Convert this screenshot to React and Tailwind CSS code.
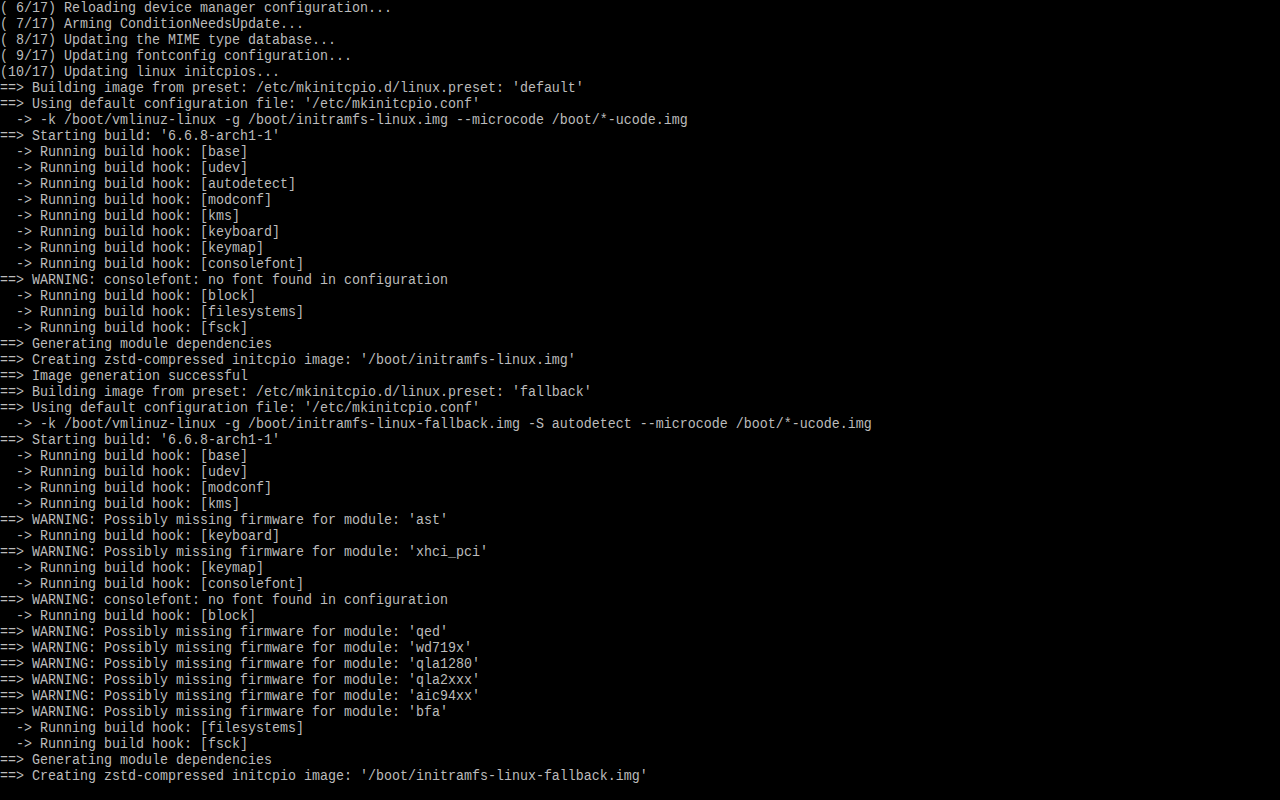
import React from 'react';

const lines = [
    '( 6/17) Reloading device manager configuration...',
    '( 7/17) Arming ConditionNeedsUpdate...',
    '( 8/17) Updating the MIME type database...',
    '( 9/17) Updating fontconfig configuration...',
    '(10/17) Updating linux initcpios...',
    "==> Building image from preset: /etc/mkinitcpio.d/linux.preset: 'default'",
    "==> Using default configuration file: '/etc/mkinitcpio.conf'",
    '  -> -k /boot/vmlinuz-linux -g /boot/initramfs-linux.img --microcode /boot/*-ucode.img',
    "==> Starting build: '6.6.8-arch1-1'",
    '  -> Running build hook: [base]',
    '  -> Running build hook: [udev]',
    '  -> Running build hook: [autodetect]',
    '  -> Running build hook: [modconf]',
    '  -> Running build hook: [kms]',
    '  -> Running build hook: [keyboard]',
    '  -> Running build hook: [keymap]',
    '  -> Running build hook: [consolefont]',
    '==> WARNING: consolefont: no font found in configuration',
    '  -> Running build hook: [block]',
    '  -> Running build hook: [filesystems]',
    '  -> Running build hook: [fsck]',
    '==> Generating module dependencies',
    "==> Creating zstd-compressed initcpio image: '/boot/initramfs-linux.img'",
    '==> Image generation successful',
    "==> Building image from preset: /etc/mkinitcpio.d/linux.preset: 'fallback'",
    "==> Using default configuration file: '/etc/mkinitcpio.conf'",
    '  -> -k /boot/vmlinuz-linux -g /boot/initramfs-linux-fallback.img -S autodetect --microcode /boot/*-ucode.img',
    "==> Starting build: '6.6.8-arch1-1'",
    '  -> Running build hook: [base]',
    '  -> Running build hook: [udev]',
    '  -> Running build hook: [modconf]',
    '  -> Running build hook: [kms]',
    "==> WARNING: Possibly missing firmware for module: 'ast'",
    '  -> Running build hook: [keyboard]',
    "==> WARNING: Possibly missing firmware for module: 'xhci_pci'",
    '  -> Running build hook: [keymap]',
    '  -> Running build hook: [consolefont]',
    '==> WARNING: consolefont: no font found in configuration',
    '  -> Running build hook: [block]',
    "==> WARNING: Possibly missing firmware for module: 'qed'",
    "==> WARNING: Possibly missing firmware for module: 'wd719x'",
    "==> WARNING: Possibly missing firmware for module: 'qla1280'",
    "==> WARNING: Possibly missing firmware for module: 'qla2xxx'",
    "==> WARNING: Possibly missing firmware for module: 'aic94xx'",
    "==> WARNING: Possibly missing firmware for module: 'bfa'",
    '  -> Running build hook: [filesystems]',
    '  -> Running build hook: [fsck]',
    '==> Generating module dependencies',
    "==> Creating zstd-compressed initcpio image: '/boot/initramfs-linux-fallback.img'",
];

const App = () => {
    return (
        <div className="w-[1280px] h-[800px] bg-black overflow-hidden">
            <pre className="m-0 font-['Liberation_Mono',monospace] text-[13.3333px] leading-[16px] text-[#bcbcbc] whitespace-pre">
                {lines.map((line, i) => (
                    <div key={i} className="h-[16px] scale-y-[1.1] origin-top">{line}</div>
                ))}
            </pre>
        </div>
    );
};

export default App;
